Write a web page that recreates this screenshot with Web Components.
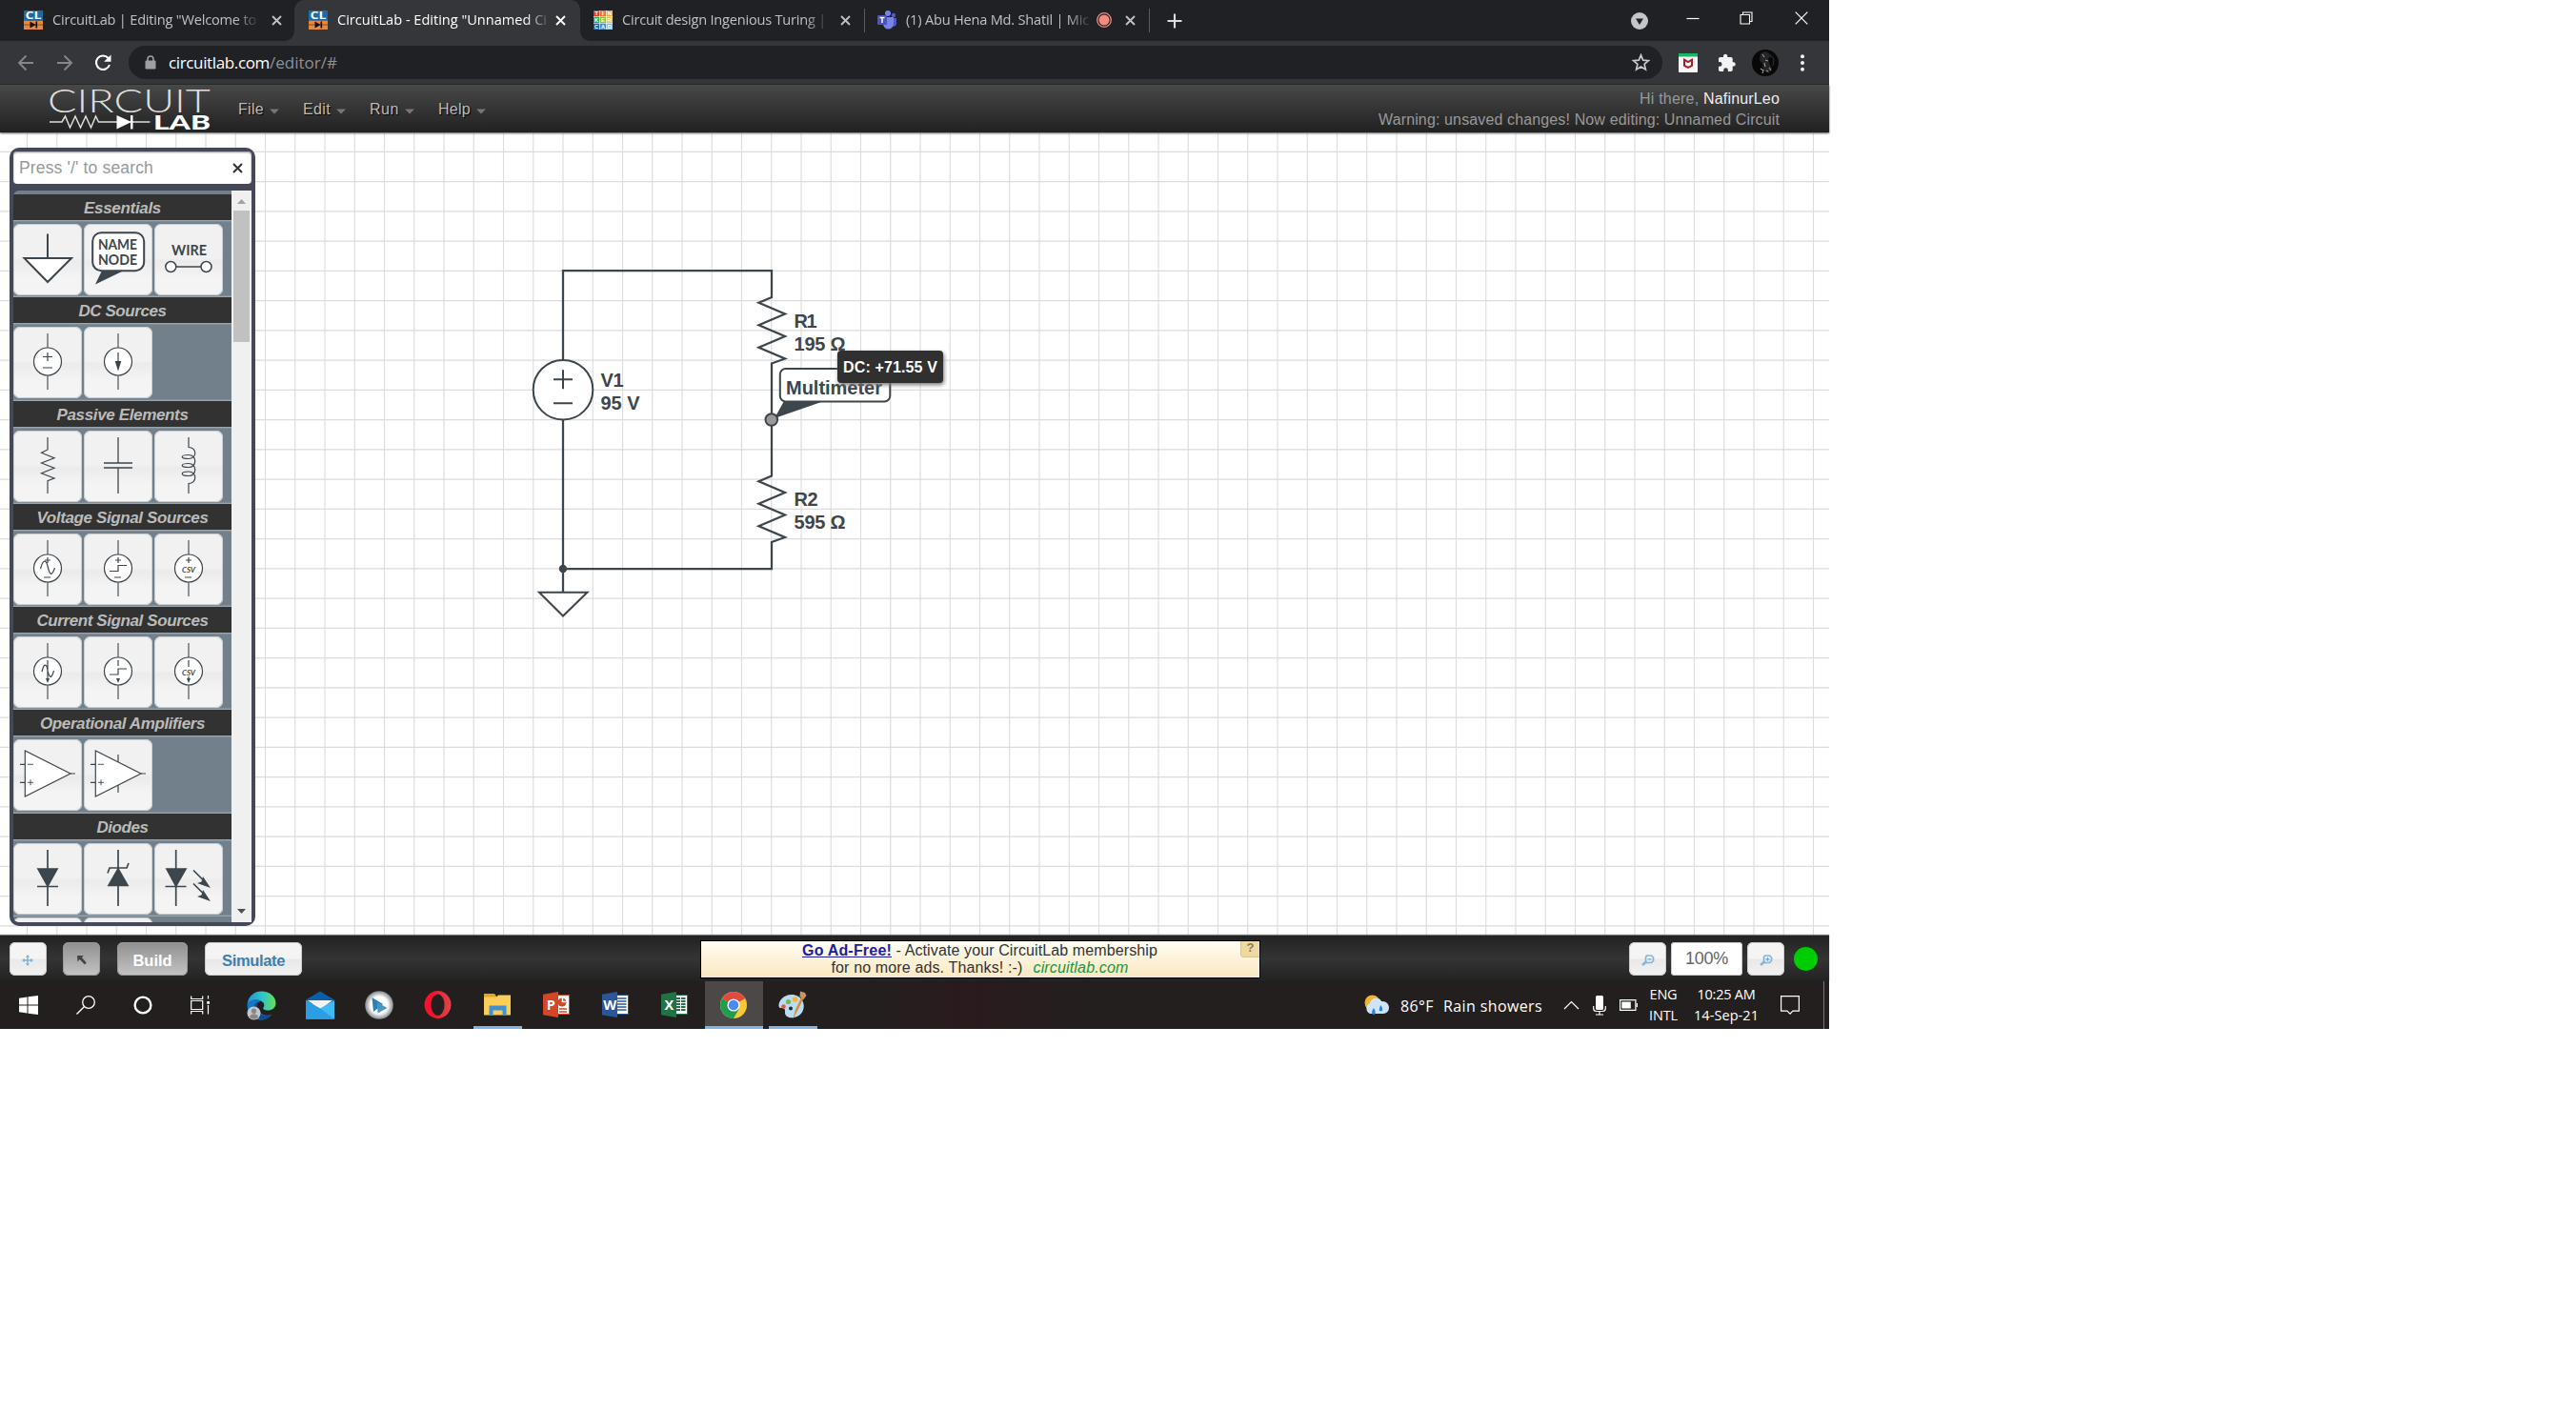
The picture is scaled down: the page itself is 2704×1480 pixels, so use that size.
<!DOCTYPE html>
<html lang="en">
<head>
<meta charset="utf-8">
<title>CircuitLab - Editing "Unnamed Circuit"</title>
<style>
html,body{margin:0;background:#fff}
body{width:2704px;height:1480px;overflow:hidden;font-family:"Liberation Sans",Arial,sans-serif}
</style>
</head>
<body>
<desktop-screen></desktop-screen>
<script>
const define = (name, html, setup) => customElements.define(name, class extends HTMLElement {
  connectedCallback() {
    if (this.shadowRoot) return;
    const t = document.createElement('template');
    t.innerHTML = typeof html === 'function' ? html(this) : html;
    this.attachShadow({mode: 'open'}).appendChild(t.content.cloneNode(true));
    if (setup) setup(this);
  }
});

/* Text run spread over a given width (w) through letter spacing. */
define('fit-text', `<style>:host{display:block;flex:none;white-space:nowrap}span{display:inline-block;white-space:pre;text-decoration:var(--line,none)}</style><span><slot></slot></span>`, el => {
  const w = parseFloat(el.getAttribute('w'));
  el.style.width = w + 'px';
  requestAnimationFrame(() => fit(el, w));
  fit(el, w);
});
function fit(el, w) {
  const s = el.shadowRoot.querySelector('span');
  s.style.letterSpacing = '0px';
  const n = el.textContent.length, real = s.getBoundingClientRect().width;
  if (n && real) s.style.letterSpacing = ((w - real) / n).toFixed(3) + 'px';
}

/* ---------- icons ---------- */
const CL = `<rect width="20" height="10" fill="#1b6aa5"/><rect y="10.5" width="20" height="9.500" fill="#e58a42"/><text x="10" y="9.300" font-family="Open Sans,sans-serif" font-weight="700" font-size="11" text-anchor="middle" textLength="17" lengthAdjust="spacingAndGlyphs" fill="#fff">CL</text><path d="M0 15h20" stroke="#8a4a20" stroke-width="1"/><path d="M6.500 11.500v7l6-3.500zM12.500 11.500h1.600v7h-1.600z" fill="#111"/>`;
const office = (c, d, l, inner) => `<path d="M15 3.500h12.500v20H15z" fill="#fff" stroke="${c}"/>${inner}<path d="M0 2.800L16 0v27L0 24.200z" fill="${d}"/><text x="8.300" y="18.800" font-family="Open Sans,sans-serif" font-weight="700" font-size="14.500" text-anchor="middle" fill="#fff">${l}</text>`;
const ICONS = {
  cl: [20, 20, CL],
  tinker: [20, 20, (() => {
    const c = ['#d9412b','#ee7b30','#f0a23c','#32a852','#8cc63f','#e8c832','#1a5fa8','#3a92cf','#7cc0e8'], l = 'TINKERCAD';
    return '<rect width="20" height="20" fill="#fff"/>' + c.map((f, i) => `<rect x="${(i % 3) * 6.8}" y="${Math.floor(i / 3) * 6.8}" width="6.200" height="6.200" fill="${f}"/><text x="${(i % 3) * 6.8 + 3.1}" y="${Math.floor(i / 3) * 6.8 + 5.1}" font-family="Liberation Sans,sans-serif" font-weight="700" font-size="5.600" text-anchor="middle" fill="#fff">${l[i]}</text>`).join('');
  })()],
  teams: [20, 20, `<circle cx="17" cy="5" r="2.200" fill="#5059c9"/><circle cx="11" cy="3" r="3" fill="#7b83eb"/><path d="M14 8h6v6a3 3 0 0 1-5 2z" fill="#5059c9"/><path d="M6 7h11v7a5.500 5.500 0 0 1-11 0z" fill="#7b83eb"/><rect y="5" width="10" height="10" rx="1" fill="#4b53bc"/><path d="M2.500 7.500h5M5 7.500v5.500" stroke="#fff" stroke-width="1.500"/>`],
  x: [11, 11, `<path d="M1 1l9 9M10 1l-9 9" stroke="currentColor" stroke-width="1.900"/>`],
  rec: [16, 16, `<circle cx="8" cy="8" r="7.300" fill="none" stroke="#f28b82" stroke-width="1.300"/><circle cx="8" cy="8" r="5.500" fill="#f28b82"/>`],
  plus: [16, 16, `<path d="M8 .5v15M.5 8h15" stroke="#dadce0" stroke-width="2.100"/>`],
  drop: [18, 18, `<circle cx="9" cy="9" r="9" fill="#c3c5c9"/><path d="M5 6.500h8l-4 6.500z" fill="#202124"/>`],
  min: [14, 14, `<path d="M.5 7.500h13" stroke="#fff" stroke-width="1.200"/>`],
  max: [14, 14, `<path d="M1 3.500h9.500V13H1zM3.500 3.500V1H13v9.500h-2.500" fill="none" stroke="#fff" stroke-width="1.100"/>`],
  close: [14, 14, `<path d="M.7.700l12.600 12.600M13.300.700L.7 13.300" stroke="#fff" stroke-width="1.200"/>`],
  back: [18, 18, `<path d="M17 9H2M9.500 1.500L2 9l7.500 7.500" fill="none" stroke="#85878b" stroke-width="1.900"/>`],
  fwd: [18, 18, `<path d="M1 9h15M8.500 1.500L16 9l-7.500 7.500" fill="none" stroke="#85878b" stroke-width="1.900"/>`],
  reload: [18, 18, `<path d="M14.600 4A7.200 7.200 0 1 0 16 11" fill="none" stroke="#fff" stroke-width="2.100"/><path d="M17.500.500v7.300h-7.300z" fill="#fff"/>`],
  lock: [12, 15, `<path d="M3 6.500V4a3 3 0 0 1 6 0v2.500" fill="none" stroke="#9aa0a6" stroke-width="1.600"/><rect x=".5" y="5.500" width="11" height="9" rx="1" fill="#9aa0a6"/>`],
  star: [19, 19, `<path d="M9.500 1.800l2.200 5.300 5.700.5-4.300 3.800 1.300 5.600-4.900-3-4.900 3 1.300-5.600L1.600 7.600l5.700-.5z" fill="none" stroke="#c6c8cc" stroke-width="1.700"/>`],
  mcafee: [20, 20, `<rect width="20" height="20" rx="1" fill="#f7f7f7"/><path d="M0 0h20v3.500H0z" fill="#19b764"/><path d="M6 6.700l4 2.300 4-2.300v6.300l-4 2-4-2z" fill="none" stroke="#a81d27" stroke-width="2"/>`],
  puzzle: [20, 20, `<path d="M17 9.300h-1.300V5.600c0-.9-.8-1.700-1.700-1.700h-3.700V2.600a2.200 2.200 0 0 0-4.300 0v1.300H2.700C1.700 3.900 1 4.700 1 5.600v3.500h1.200a2.350 2.350 0 0 1 0 4.700H1v3.500c0 .9.800 1.700 1.700 1.700h3.500v-1.300a2.350 2.350 0 0 1 4.700 0V19H14c.9 0 1.700-.8 1.700-1.700v-3.700H17a2.200 2.200 0 0 0 0-4.300z" fill="#f1f3f4"/>`],
  avatar: [28, 28, `<circle cx="14" cy="14" r="14" fill="#080808"/><path d="M9 4l5-2 4 2 2 4-3 1 1 5 3 6-3 5-6-3-1-7-3-4z" fill="#252527"/><path d="M11 5l2 3M14 11l3 1M13 14l1 4M18 19l2 3M9 20l3 2-1 3M15 22l2 1" stroke="#999" stroke-width="1.100" fill="none"/><path d="M19 5l4 5-1 7" stroke="#333" fill="none"/>`],
  dots: [4, 18, `<g fill="#f1f3f4"><circle cx="2" cy="2.200" r="2"/><circle cx="2" cy="9" r="2"/><circle cx="2" cy="15.800" r="2"/></g>`],
  logo: [170, 46, `<g fill="#dedede"><text x="-2" y="27.500" font-family="Lato Light,Lato,sans-serif" font-weight="300" font-size="34" textLength="171" lengthAdjust="spacingAndGlyphs">CIRCUIT</text><text x="109" y="45.500" font-family="Lato,sans-serif" font-weight="900" font-size="20" textLength="60" lengthAdjust="spacingAndGlyphs" fill="#fff">LAB</text></g><path d="M0 38h13l3.500-6 5 12 5.500-12 5.500 12 5.500-12 5.500 12 5-12 3 6h54" fill="none" stroke="#ddd" stroke-width="1.500"/><path d="M70.500 31v14.500L86 38zM85 31h2.500v14.500H85z" fill="#fff"/>`],
  caret: [10, 6, `<path d="M0 .5h10L5 5.500z" fill="#777"/>`],
  sx: [11, 11, `<path d="M1 1l9 9M10 1l-9 9" stroke="#333" stroke-width="2.100"/>`],
  move: [12, 12, `<path d="M6 1v10M1 6h10" stroke="#7fb4de" stroke-width="1.500"/><path d="M6 0l2.200 2.700H3.800zM6 12l2.200-2.700H3.800zM0 6l2.700-2.200v4.400zM12 6L9.300 3.800v4.400z" fill="#7fb4de"/>`],
  arrow: [10, 10, `<path d="M0 0h6.800L4.900 2l4.800 5.500-1.700 1.900L2.700 4 .5 6.500z" fill="#444"/>`],
  zout: [14, 12, `<path d="M5.500 1h5l2 2v3.500l-2 2h-5L4.500 6.500V3z" fill="none" stroke="#82b5dc" stroke-width="1.700"/><path d="M6.500 4.800h4" stroke="#6aa5d6" stroke-width="1.200"/><path d="M5 7.500L1 11" stroke="#82b5dc" stroke-width="2.500"/>`],
  zin: [14, 12, `<path d="M5.500 1h5l2 2v3.500l-2 2h-5L4.500 6.500V3z" fill="none" stroke="#82b5dc" stroke-width="1.700"/><path d="M6.500 4.800h4M8.500 2.800v4" stroke="#6aa5d6" stroke-width="1.200"/><path d="M5 7.500L1 11" stroke="#82b5dc" stroke-width="2.500"/>`],
  win: [20, 20, `<path d="M0 2.700L8.500 1.500v8H0zM9.500 1.300L20 0v9.500H9.500zM0 10.500h8.500v8L0 17.300zM9.500 10.500H20V20L9.500 18.700z" fill="#fff"/>`],
  search: [20, 20, `<circle cx="13" cy="7" r="6.300" fill="none" stroke="#fff" stroke-width="1.300"/><path d="M8.500 11.500L.5 19.500" stroke="#fff" stroke-width="1.400"/>`],
  ring: [20, 20, `<circle cx="10" cy="10" r="8.400" fill="none" stroke="#fff" stroke-width="2.400"/>`],
  task: [21, 20, `<path d="M.7.500v3h12V.500M.7 19.500v-3h12v3M.7 5.500h12v9H.7zM18.500 0v3.500M18.500 10v9.500" fill="none" stroke="#fff" stroke-width="1.200"/><rect x="17.200" y="6" width="2.800" height="2.800" fill="#fff"/>`],
  edge: [31, 31, `<defs><linearGradient id="a" x1="0" x2="1"><stop offset="0" stop-color="#2196d8"/><stop offset=".55" stop-color="#2fc6c8"/><stop offset="1" stop-color="#6ae04e"/></linearGradient></defs><path d="M.5 14C2 5 8 .5 15.500.500 24 .5 30.500 6 30.500 13c0 5-4 7.500-8.500 7.500-3 0-5.500-1-4.500-3 1.500-2 1-5-2-6.500C10 8 4 9.500 .5 14z" fill="url(#a)"/><path d="M.5 14C4 9 11 8 15.500 11c-4-.5-6 4-4.500 8 2 5 8 8 15 6-3 4-7 5.500-11 5.500C7 30.500 0 24 .5 14z" fill="#1179c9"/><path d="M15 11c-5 1-6.500 6-4 10 3 5 9 6 15.500 3.500C23 29 19 30.500 15.500 30.500 9 28 5 20 8 15c1.500-2.500 4-4 7-4z" fill="#0d4c92"/><circle cx="7.500" cy="23.500" r="7" fill="#c5c7c9"/><circle cx="7.500" cy="21.300" r="2.700" fill="#888"/><path d="M3 28c0-5 9-5 9 0a7 7 0 0 1-9 0z" fill="#888"/>`],
  mail: [30, 30, `<path d="M0 9.500L15 .5l15 9V20H0z" fill="#0d5ea8"/><path d="M2 10h26L15 20z" fill="#f4f4f4"/><path d="M0 10v19.500h30z" fill="#2ba7ea"/><path d="M0 10l15 8.500L30 10v19.500H0z" fill="#42b9f0"/><path d="M15 18.500l15 11H0V10z" fill="#2a9fe6"/>`],
  ptr: [30, 30, `<defs><radialGradient id="p"><stop offset=".6" stop-color="#fff"/><stop offset="1" stop-color="#84898c"/></radialGradient></defs><circle cx="15" cy="15" r="14.800" fill="url(#p)"/><path d="M7.500 7l11.500 7-10 8z" fill="#2a80b9"/><path d="M13 12l10.500 6-10 5.500z" fill="#4a97c4"/>`],
  opera: [29, 30, `<defs><linearGradient id="o" x1="0" x2="1"><stop offset=".3" stop-color="#f2142c"/><stop offset="1" stop-color="#d8484c"/></linearGradient></defs><path fill-rule="evenodd" d="M14.500 0a14 14.500 0 1 0 .01 0zM14.500 3.500a7 11.200 0 1 1-.01 0z" fill="url(#o)"/>`],
  folder: [28, 26, `<path d="M0 1h11l3 4H0z" fill="#e0a624"/><path d="M0 4.500h13l2-2H28v21H0z" fill="#f9cf5a"/><path d="M5.500 24V13.500h18V24h-4v-5.500h-10V24z" fill="#3f91d0"/>`],
  ppt: [28, 28, office('#d24726', '#d24726', 'P', `<circle cx="20" cy="11" r="4.500" fill="#d24726"/><path d="M20.500 6v4.500H25" stroke="#fff" stroke-width="1.500" fill="none"/><path d="M17 18h8M17 21h8" stroke="#d24726" stroke-width="1.300"/>`)],
  word: [28, 28, office('#2b579a', '#2b579a', 'W', `<path d="M16 7h9.500M16 10h9.500M16 13h9.500M16 16h9.500M16 19h9.500" stroke="#2b579a" stroke-width="1.400"/>`)],
  excel: [28, 28, office('#217346', '#217346', 'X', `<path d="M16 7h9.500M16 10h9.500M16 13h9.500M16 16h9.500M16 19h9.500" stroke="#217346" stroke-width="2"/><path d="M20.500 5v18" stroke="#fff"/>`)],
  chrome: [28, 28, `<circle cx="14" cy="14" r="14" fill="#fbc934"/><path d="M14 14L1.900 7A14 14 0 0 1 26.100 7z" fill="#e04a3f"/><path d="M1.900 7A14 14 0 0 0 14 28l6-10.500-6-3.500z" fill="#1f9d55"/><circle cx="14" cy="14" r="6.600" fill="#fff"/><circle cx="14" cy="14" r="5.200" fill="#4a8af4"/>`],
  paint: [30, 30, `<path d="M14 4C5 4 0 11 .5 16c.5 3 3 2 5 2.500 3 1 0 5 3 8 4 3.500 13 1.500 16.500-4C30 14 24 4 14 4z" fill="#b9dcee"/><circle cx="5.500" cy="16.500" r="2.300" fill="#e8523f"/><circle cx="10.500" cy="11.500" r="2.600" fill="#6fbb4c"/><circle cx="17.500" cy="9" r="2.800" fill="#f2b53a"/><circle cx="13" cy="18.500" r="2" fill="#1f2a33"/><path d="M24.500 6L18 20l-3 10 4.500-8 7.500-15z" fill="#d88a3a"/><path d="M23 .5l5 1.500 1.500 3-3 4-4-3z" fill="#c89468"/>`],
  weather: [26, 22, `<circle cx="8.500" cy="8.500" r="8" fill="#f2b233"/><path d="M6 20a6 6 0 0 1 0-11C7 3 16 2 18 7c5-.5 8 3 8 6.500a6 6 0 0 1-6 6.500z" fill="#cfe4f7"/><path d="M10 14c2 3 2.500 7 0 7s-2.500-4 0-7zM17.500 11c2 3 2.500 6.500 0 6.500s-2-3.500 0-6.500z" fill="#2d86d9"/>`],
  chev: [17, 10, `<path d="M1 9l7.500-7.500L16 9" fill="none" stroke="#fff" stroke-width="1.200"/>`],
  mic: [14, 21, `<rect x="3" width="8" height="15" rx="1.500" fill="#fff"/><path d="M.7 11v2.500q0 3 3 3h6.600q3 0 3-3V11M7 16.500V20M3 20h8" fill="none" stroke="#fff" stroke-width="1.200"/>`],
  batt: [19, 12, `<path d="M.6.600h16.300v10.800H.600z" fill="none" stroke="#fff" stroke-width="1.200"/><rect x="2.300" y="2.500" width="9.500" height="7" fill="#fff"/><path d="M18.300 4v4" stroke="#fff" stroke-width="1.400"/>`],
  note: [20, 20, `<path d="M.6.600h18.800v15.500H13l-3 3-3-3H.6z" fill="none" stroke="#fff" stroke-width="1.200"/>`]
};
define('ui-icon', el => {
  const [w, h, body] = ICONS[el.getAttribute('name')];
  return `<style>:host{display:block;flex:none;width:${w}px;height:${h}px}svg{display:block;overflow:visible}</style><svg width="${w}" height="${h}" viewBox="0 0 ${w} ${h}">${body}</svg>`;
});

/* ---------- browser chrome ---------- */
define('browser-tab', el => `<style>
:host{display:flex;flex:none;align-items:center;height:43px;box-sizing:border-box;color:#bdc1c6;font:14.600px/20px "Open Sans","Noto Sans",sans-serif;position:relative}
:host([active]){background:#35363a;border-radius:10px 10px 0 0;color:#fff}
:host([active])::before,:host([active])::after{content:"";position:absolute;bottom:0;width:10px;height:10px;background:radial-gradient(circle at 0 0,transparent 9.500px,#35363a 10px)}
:host([active])::before{left:-10px}
:host([active])::after{right:-10px;background:radial-gradient(circle at 100% 0,transparent 9.500px,#35363a 10px)}
.t{margin:-3px 0 0 10px;overflow:hidden;-webkit-mask:linear-gradient(90deg,#000 calc(100% - 22px),rgba(0,0,0,.15))}
ui-icon{margin-top:-1px}
</style><ui-icon name="${el.getAttribute('icon')}"></ui-icon><div class="t"><slot></slot></div><slot name="end"></slot>`);

define('tab-strip', `<style>
:host{display:flex;height:43px;background:#202124;align-items:center}
i{width:1px;height:25px;background:#5a5c60;flex:none}
ui-icon[slot]{margin-top:-1px}
</style>
<browser-tab icon="cl" style="width:309px;padding-left:25px"><fit-text w="214">CircuitLab | Editing "Welcome to</fit-text><ui-icon slot="end" name="x" style="margin-left:16px"></ui-icon></browser-tab>
<browser-tab active icon="cl" style="width:300px;padding-left:15px"><fit-text w="220">CircuitLab - Editing "Unnamed Ci</fit-text><ui-icon slot="end" name="x" style="margin-left:9px"></ui-icon></browser-tab>
<browser-tab icon="tinker" style="width:298px;padding-left:14px"><fit-text w="214">Circuit design Ingenious Turing |</fit-text><ui-icon slot="end" name="x" style="margin-left:15px"></ui-icon></browser-tab><i></i>
<browser-tab icon="teams" style="width:298px;padding-left:13px"><fit-text w="192">(1) Abu Hena Md. Shatil | Mic</fit-text><ui-icon slot="end" name="rec" style="margin-left:8px"></ui-icon><ui-icon slot="end" name="x" style="margin-left:14px"></ui-icon></browser-tab><i></i>
<ui-icon name="plus" style="margin-left:18px"></ui-icon>
<ui-icon name="drop" style="margin-left:auto"></ui-icon>
<ui-icon name="min" style="margin:-6px 0 0 40px"></ui-icon>
<ui-icon name="max" style="margin:-6px 0 0 42px"></ui-icon>
<ui-icon name="close" style="margin:-6px 22px 0 44px"></ui-icon>`);

define('address-bar', `<style>
:host{display:flex;height:45px;background:#35363a;align-items:center;border-bottom:1px solid #242527}
.o{display:flex;align-items:center;width:1610px;height:35px;border-radius:18px;background:#202124;margin-left:18px;font:17px/24px "Open Sans","Noto Sans",sans-serif;color:#fff}
.p{color:#8d9196}
</style>
<ui-icon name="back" style="margin-left:18px"></ui-icon><ui-icon name="fwd" style="margin-left:23px"></ui-icon><ui-icon name="reload" style="margin-left:22px"></ui-icon>
<div class="o"><ui-icon name="lock" style="margin-left:17px"></ui-icon><fit-text w="106" style="margin-left:13px">circuitlab.com</fit-text><fit-text class="p" w="71">/editor/#</fit-text><ui-icon name="star" style="margin-left:auto;margin-right:13px"></ui-icon></div>
<ui-icon name="mcafee" style="margin-left:17px"></ui-icon><ui-icon name="puzzle" style="margin-left:21px"></ui-icon><ui-icon name="avatar" style="margin-left:16px"></ui-icon><ui-icon name="dots" style="margin-left:23px"></ui-icon>`);

/* ---------- application header ---------- */
define('menu-item', `<style>:host{display:flex;align-items:center;font-size:16px;color:#bbb;text-shadow:1px 1px 1px #000}ui-icon{margin:5px 0 0 6px}</style><slot></slot><ui-icon name="caret"></ui-icon>`);
define('app-header', `<style>
:host{display:flex;height:50px;background:linear-gradient(#484848,#212121);box-shadow:0 1px 2px #555;position:relative;box-sizing:border-box;padding-left:52px}
nav{display:flex;margin:1px 0 0 28px;gap:25px;align-items:center}
.r{margin-left:auto;margin-right:52px;color:#999;font-size:16px;line-height:22px;padding-top:4px;display:flex;flex-direction:column;align-items:flex-end}
.r div{display:flex}b{font-weight:400;color:#eee}
</style>
<ui-icon name="logo" style="margin-top:1px"></ui-icon>
<nav><menu-item><fit-text w="27">File</fit-text></menu-item><menu-item><fit-text w="29">Edit</fit-text></menu-item><menu-item><fit-text w="31">Run</fit-text></menu-item><menu-item><fit-text w="34">Help</fit-text></menu-item></nav>
<div class="r"><div><fit-text w="67">Hi there, </fit-text><b><fit-text w="80">NafinurLeo</fit-text></b></div><fit-text w="421">Warning: unsaved changes! Now editing: Unnamed Circuit</fit-text></div>`);

/* ---------- component palette ---------- */
const leads = '<path d="M36 7v15M36 51v15" stroke="#777b7e" stroke-width="1.600"/><circle cx="36" cy="36.500" r="14.500" fill="#fff"/>';
const t = (x, y, s, w, txt, k = '') => `<text x="${x}" y="${y}" font-size="${s}" textLength="${w}" lengthAdjust="spacingAndGlyphs" fill="#3c464c" stroke="none" font-family="Lato,Open Sans,sans-serif" ${k}>${txt}</text>`;
const dn = '<path d="M34 44h4l-2 5z" fill="#3c464c" stroke="none"/>';
const PARTS = {
  gnd: '<g stroke-width="2"><path d="M36 10.500V36M11.500 36h49.500L36 61z" fill="#fff"/></g>',
  name: `<path d="M19 49l-7 14.500L42 49z" fill="#3c464c" stroke="none"/><rect x="9.200" y="9.200" width="54" height="40" rx="9" fill="#fff" stroke-width="2"/>${t(15, 27, 15, 41, 'NAME', 'font-weight="700"')}${t(15, 43, 15, 41, 'NODE', 'font-weight="700"')}`,
  wire: `${t(18, 33, 15.500, 37, 'WIRE', 'font-weight="700"')}<g stroke-width="1.500"><path d="M23 45h26"/><circle cx="17.300" cy="45" r="5.500" fill="#fff"/><circle cx="54.500" cy="45" r="5.500" fill="#fff"/></g>`,
  vdc: leads + '<path d="M31 31.500h10M36 27v9M31 43h10"/>',
  idc: leads + '<path d="M36 27v15"/><path d="M33.500 36.500h5L36 44.500z" fill="#3c464c"/>',
  res: '<path d="M36 7v13l-6.500 3.300L43 28.700 29.500 34 43 39.300l-13.500 5.400L43 50l-7 2.700V66"/>',
  cap: '<path d="M36 7v27M36 39v27M21 34h30M21 39h30" stroke-width="1.300"/>',
  ind: '<path d="M36 7V17.500C45 17.500 45 29.500 36 29.500C27 29.500 27 25.500 36 25.500C45 25.500 45 38.500 36 38.500C27 38.500 27 34.500 36 34.500C45 34.500 45 47.500 36 47.500C27 47.500 27 43 36 43C45 43 45 55.500 36 55.500V66"/>',
  vsin: leads + '<path d="M33 28h6M36 25v6M32 46h7M28.500 37c3-11 6-10 8-1 2 8 4 9 7 0"/>',
  vstep: leads + '<path d="M33 28h6M36 25v6M32 46h7M27 39.500h9v-6h9"/>',
  vcsv: leads + '<path d="M33 28h6M36 25v6M32 46h7"/>' + t(29, 40.5, 8, 14, 'CSV', 'font-style="italic" font-weight="700"'),
  isin: leads + '<path d="M36 25v22M30 37c2-9 5-9 6-1 2 8 4 9 6.500 0"/>' + dn,
  istep: leads + '<path d="M36 25v6M27 40h9v-6h9"/>' + dn,
  icsv: leads + '<path d="M36 25v7M36 42v4"/>' + t(29, 40.5, 8, 14, 'CSV', 'font-style="italic" font-weight="700"') + dn,
  op: '<path d="M7 26.300h5M7 45.300h5M60 36h5"/><path d="M12.300 12v48L60 36z" fill="#fff"/><path d="M15 26.300h6M15 45.300h6M18 42.300v6" stroke-width=".9"/>',
  op2: '<path d="M7 26.300h5M7 45.300h5M60 36h5M36 16v8M36 48v8"/><path d="M12.300 12v48L60 36z" fill="#fff"/><path d="M15 26.300h6M15 45.300h6M18 42.300v6" stroke-width=".9"/>',
  dio: '<g stroke-width="1.700"><path d="M36 7v59M25 45.500h22"/><path d="M26 27h20L36 45z" fill="#3c464c"/></g>',
  zen: '<g stroke-width="1.700"><path d="M36 7v59M25 31.500l2-5.500h18l2-5"/><path d="M26 44.500h20L36 27z" fill="#3c464c"/></g>',
  led: '<g stroke-width="1.700"><path d="M22.700 7v59M11.500 45.500h22M41 28.500l11 11M41 42.500l11 11"/><path d="M13 27h20l-10.300 18z" fill="#3c464c"/><path d="M59 47l-14-5 4.500-1.500 1.500-5.500zM59 61l-14-5 4.500-1.500 1.500-5.500z" fill="#3c464c" stroke="none"/></g>'
};
define('part-tile', el => `<style>:host{display:block;flex:none;width:72px;height:75px;box-sizing:border-box;border-radius:7px;background:linear-gradient(#f1f1f1 48%,#ebebeb 52%,#f4f4f4 75%);box-shadow:inset 0 0 0 1px #c9ced1}svg{display:block}</style>
<svg width="72" height="75" fill="none" stroke="#3c464c" stroke-width="1.200">${PARTS[el.getAttribute('part')] || ''}</svg>`);
define('part-section', el => `<style>
:host{display:block;flex:none;height:108.300px;box-sizing:border-box}
header{display:flex;justify-content:center;height:27px;background:#323232;color:#bbb;font:italic bold 17px/30px "Liberation Sans",Arial,sans-serif}
.g{display:flex;gap:2px;padding-top:4px;height:77.300px;box-shadow:inset 0 2px 2px -1px #a9b3b9,inset 0 -2px 2px -1px #a9b3b9}
</style><header><fit-text w="${el.getAttribute('w')}">${el.getAttribute('label')}</fit-text></header><div class="g">${el.getAttribute('parts').split(' ').map(p => `<part-tile part="${p}"></part-tile>`).join('')}</div>`);
define('parts-panel', `<style>
:host{display:flex;flex-direction:column;position:absolute;left:10px;top:15px;width:258px;height:817px;box-sizing:border-box;padding:4px;border-radius:10px;background:#444858}
.s{display:flex;align-items:center;height:34px;flex:none;background:#fff;border-radius:4px;color:#999;font-size:17.500px;padding:0 9px 0 6px;justify-content:space-between;box-shadow:inset 0 1px 2px #888}
.b{display:flex;margin-top:7px;height:768px}
.l{width:229px;overflow:hidden;background:#72808b;display:flex;flex-direction:column;padding-top:4px;box-sizing:border-box;border-top-left-radius:6px;border-bottom-left-radius:6px}
.v{width:21px;background:#f0f0f0;display:flex;flex-direction:column;align-items:center;box-sizing:border-box;padding:9px 0 9px}
.th{width:17px;height:138px;background:#c1c1c1;margin-top:7px}
.m{display:flex;gap:2px;flex:none;padding-top:1px}
</style>
<div class="s"><fit-text w="141">Press '/' to search</fit-text><ui-icon name="sx"></ui-icon></div>
<div class="b"><div class="l">
<part-section label="Essentials" w="81" parts="gnd name wire"></part-section>
<part-section label="DC Sources" w="92" parts="vdc idc"></part-section>
<part-section label="Passive Elements" w="138" parts="res cap ind"></part-section>
<part-section label="Voltage Signal Sources" w="180" parts="vsin vstep vcsv"></part-section>
<part-section label="Current Signal Sources" w="180" parts="isin istep icsv"></part-section>
<part-section label="Operational Amplifiers" w="173" parts="op op2"></part-section>
<part-section label="Diodes" w="54" parts="dio zen led"></part-section>
<div class="m"><part-tile part="none"></part-tile><part-tile part="none"></part-tile></div>
</div><div class="v"><svg width="9" height="5"><path d="M0 5h9L4.500 0z" fill="#a3a3a3"/></svg><div class="th"></div><svg width="9" height="5" style="margin-top:auto"><path d="M0 0h9L4.500 5z" fill="#505050"/></svg></div></div>`);

/* ---------- schematic canvas ---------- */
const zig = y => `M810 ${y}l-13.500 5.800L824 ${y + 17.500}l-27.500 11.700L824 ${y + 41}l-27.500 11.700L824 ${y + 64.500}L810 ${y + 69.500}`;
const lbl = (x, y, w, s) => `<text x="${x}" y="${y}" textLength="${w}">${s}</text>`;
define('circuit-canvas', () => {
  let grid = '';
  for (let x = 28.5; x < 1920; x += 31.25) grid += `M${x.toFixed(2)} 140V981`;
  for (let y = 159; y < 981; y += 31.25) grid += `M0 ${(y + .3).toFixed(2)}H1920`;
  return `<style>:host{display:block;position:relative;height:842px;background:#fff}svg{display:block}
.tip{position:absolute;left:879px;top:228px;width:111px;height:34px;box-sizing:border-box;padding-left:6px;border-radius:4px;background:#303030;color:#fff;font-weight:bold;font-size:16px;line-height:35px;box-shadow:1px 2px 4px #777}</style>
<svg width="1920" height="842" viewBox="0 140 1920 842" fill="none" stroke="#3c464c" stroke-width="2">
<path d="${grid}" stroke="#dcdcdc" stroke-width="1.150"/>
<path d="M591 378V284h219v28${zig(312).replace('M', 'L')}V499.500${zig(499.500).replace('M', 'L')}V597H591M591 440.500V621.500" stroke-width="2.250"/>
<circle cx="591" cy="409.200" r="31.300" fill="#fff"/><path d="M581 398.300h20M591 388.300v20M581 423.300h20"/>
<circle cx="591" cy="597" r="4.200" fill="#3c464c" stroke="none"/><path d="M566 621.800h50.500L591 646.500z" fill="#fff"/>
<path d="M823 421l-10 18 52-18z" fill="#3c464c" stroke="none"/><rect x="818.800" y="387" width="115.500" height="34.500" rx="6" fill="#fff"/>
<circle cx="809.800" cy="440.500" r="6.300" fill="#999"/>
<g font-family="Liberation Sans,Arial,sans-serif" font-weight="bold" font-size="20" fill="#3c464c" stroke="none">
${lbl(630.500, 405.700, 24, 'V1')}${lbl(630.500, 429.700, 41, '95 V')}${lbl(833.500, 343.700, 24, 'R1')}${lbl(833.500, 367.700, 54, '195 Ω')}${lbl(833.500, 530.700, 25, 'R2')}${lbl(833.500, 554.700, 54, '595 Ω')}${lbl(825, 413.700, 101, 'Multimeter')}
</g></svg>
<div class="tip"><fit-text w="99">DC: +71.55 V</fit-text></div>
<parts-panel></parts-panel>`;
});

/* ---------- bottom toolbar and taskbar ---------- */
define('tool-button', `<style>:host{display:flex;flex:none;width:39px;height:35px;align-items:center;justify-content:center;border-radius:6px;background:linear-gradient(#f4f4f4 48%,#e9e9e9 52%,#f2f2f2);color:#3a80b5;font:bold 16.500px/34px "Liberation Sans",Arial,sans-serif;box-shadow:inset 0 0 0 1px #ccc}
:host([on]){background:linear-gradient(#8f8f8f,#c4c4c4);color:#fff;box-shadow:inset 0 0 0 1px #999}</style><slot></slot>`);
define('ad-banner', `<style>
:host{display:flex;width:586px;height:38px;box-sizing:content-box;border:1px solid #000;background:linear-gradient(#fffdf3,#fbe8c0);color:#333;font-size:16px;line-height:18px;position:relative;flex-direction:column;flex:none;padding-top:1px;height:37px}
.a{display:flex}.a b{color:#1c1ca8;--line:underline}.g{color:#1a9641;font-style:italic}
.q{position:absolute;right:0;top:0;width:20px;height:17px;background:#efd9a2;color:#887b55;font:bold 13px/14px "Liberation Sans",sans-serif;text-align:center;border-radius:0 0 0 4px;border:1px solid #d8c48e;border-width:0 0 1px 1px;box-sizing:border-box}
</style>
<div class="a" style="padding-left:106px"><b><fit-text w="94">Go Ad-Free!</fit-text></b><fit-text w="279"> - Activate your CircuitLab membership</fit-text></div>
<div class="a" style="padding-left:136.500px"><fit-text w="201">for no more ads. Thanks! :-)</fit-text><fit-text class="g" w="100" style="margin-left:11px">circuitlab.com</fit-text></div>
<div class="q">?</div>`);
define('app-footer', `<style>
:host{display:flex;height:48px;box-sizing:border-box;padding:7px 12px 0 10px;background:linear-gradient(#222,#343434 50%,#222);position:relative;box-shadow:0 -1px 1px #777}
ad-banner{margin:-2px 0 0 418px}
.z{width:75px;height:35px;background:#fff;border-radius:4px;color:#666;font-size:18px;line-height:34px;display:flex;justify-content:center;margin:0 5px;box-shadow:inset 0 0 0 1px #ccc}
.d{width:25px;height:25px;border-radius:50%;background:#00cd00;margin:5px 0 0 10px}
.e{display:flex;margin-left:auto}
</style>
<tool-button><ui-icon name="move" style="margin:2px 2px 0 0"></ui-icon></tool-button>
<tool-button on style="margin-left:17px"><ui-icon name="arrow" style="margin-top:2px"></ui-icon></tool-button>
<tool-button on style="margin-left:18px;width:74px;padding-top:2px;height:33px"><fit-text w="41">Build</fit-text></tool-button>
<tool-button style="margin-left:18px;width:102px;padding-top:2px;height:33px"><fit-text w="66">Simulate</fit-text></tool-button>
<ad-banner></ad-banner>
<div class="e"><tool-button><ui-icon name="zout" style="margin-top:2px"></ui-icon></tool-button><div class="z"><fit-text w="45">100%</fit-text></div><tool-button><ui-icon name="zin" style="margin-top:2px"></ui-icon></tool-button><div class="d"></div></div>`);
define('task-item', `<style>:host{display:flex;flex:none;height:50px;box-sizing:border-box;align-items:center;justify-content:center}
:host([open]){border-bottom:3px solid #7fb4e3;padding-top:3px}:host([front]){background:#4c4848}</style><slot></slot>`);
define('task-bar', `<style>
:host{display:flex;height:50px;background:linear-gradient(90deg,#231f1f 0,#231f1f 47%,#2a1b1d 53%,#231f1f 60%,#231f1f);color:#fff;font:16px/22px "Open Sans","Noto Sans",sans-serif;align-items:center}
.k{display:flex;flex-direction:column;align-items:center;font-size:14.500px;line-height:22px;padding-top:0}
.bar{width:1px;height:50px;background:#777;margin:0 5px 0 auto}
task-item ui-icon{margin-right:1px}
</style>
<ui-icon name="win" style="margin-left:20px"></ui-icon><ui-icon name="search" style="margin-left:40px"></ui-icon><ui-icon name="ring" style="margin-left:40px"></ui-icon><ui-icon name="task" style="margin-left:40px"></ui-icon>
<ui-icon name="edge" style="margin-left:38px"></ui-icon><ui-icon name="mail" style="margin-left:31px"></ui-icon><ui-icon name="ptr" style="margin-left:32px"></ui-icon><ui-icon name="opera" style="margin-left:32px"></ui-icon>
<task-item open style="margin-left:23px;width:51px"><ui-icon name="folder"></ui-icon></task-item>
<ui-icon name="ppt" style="margin-left:22px"></ui-icon><ui-icon name="word" style="margin-left:34px"></ui-icon><ui-icon name="excel" style="margin-left:34px"></ui-icon>
<task-item open front style="margin-left:18px;width:61px"><ui-icon name="chrome"></ui-icon></task-item>
<task-item open style="margin-left:6px;width:51px"><ui-icon name="paint"></ui-icon></task-item>
<ui-icon name="weather" style="margin-left:574px"></ui-icon>
<fit-text w="35" style="margin-left:12px;padding-top:2px">86°F</fit-text><fit-text w="104" style="margin-left:10px;padding-top:2px">Rain showers</fit-text>
<ui-icon name="chev" style="margin-left:22px"></ui-icon><ui-icon name="mic" style="margin-left:14px"></ui-icon><ui-icon name="batt" style="margin-left:14px"></ui-icon>
<div class="k" style="margin-left:12px"><fit-text w="29">ENG</fit-text><fit-text w="30">INTL</fit-text></div>
<div class="k" style="margin-left:17px"><fit-text w="61">10:25 AM</fit-text><fit-text w="68">14-Sep-21</fit-text></div>
<ui-icon name="note" style="margin-left:23px"></ui-icon><div class="bar"></div>`);

define('desktop-screen', `<style>:host{display:flex;flex-direction:column;width:1920px;height:1080px;background:#fff}app-header{z-index:1}app-footer{z-index:1}</style>
<tab-strip></tab-strip><address-bar></address-bar><app-header></app-header><div style="height:1px"></div><circuit-canvas></circuit-canvas><app-footer></app-footer><task-bar></task-bar>`);
</script>
</body>
</html>
